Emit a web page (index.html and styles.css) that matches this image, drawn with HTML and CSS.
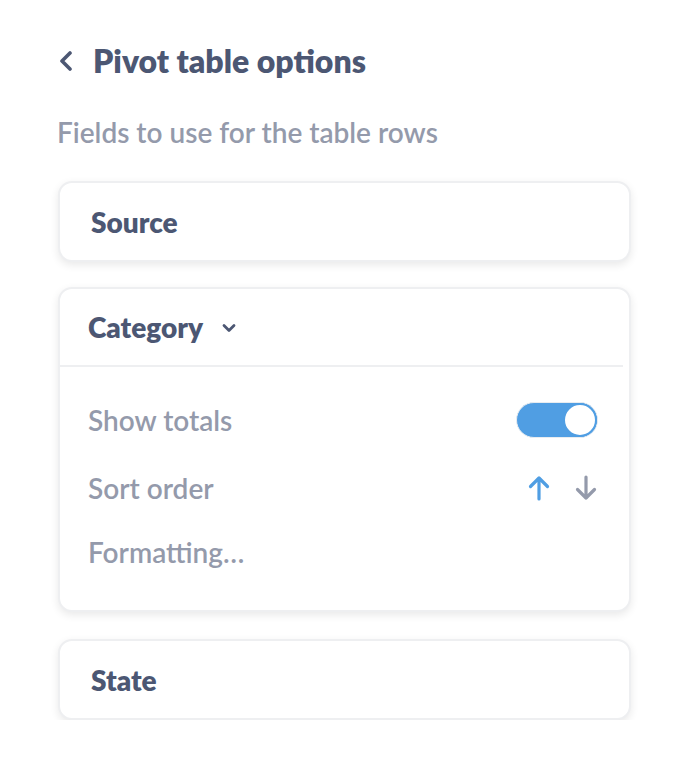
FILE: index.html
```html
<!DOCTYPE html>
<html>
<head>
<meta charset="utf-8">
<link rel="stylesheet" href="styles.css">
</head>
<body>
<div class="panel">
  <div class="header">
    <svg class="back" width="16" height="20" viewBox="0 0 16 20"><path d="M12 2 L4 10 L12 18" fill="none" stroke="#4c5773" stroke-width="3.6" stroke-linecap="round" stroke-linejoin="round"/></svg>
    <h1 class="title">Pivot table options</h1>
  </div>
  <div class="subtitle">Fields to use for the table rows</div>
  <div class="card simple first"><span class="field">Source</span></div>
  <div class="card expanded">
    <div class="card-head">
      <span class="field">Category</span>
      <svg class="caret" width="14" height="10" viewBox="0 0 14 10"><path d="M2 2.5 L7 7.5 L12 2.5" fill="none" stroke="#4c5773" stroke-width="2.8" stroke-linecap="round" stroke-linejoin="round"/></svg>
    </div>
    <div class="card-body">
      <div class="row">
        <span class="label">Show totals</span>
        <div class="toggle"><div class="knob"></div></div>
      </div>
      <div class="row">
        <span class="label">Sort order</span>
        <div class="arrows">
          <svg width="22" height="26" viewBox="0 0 22 26"><path d="M11 24 V3 M2.5 11.5 L11 3 L19.5 11.5" fill="none" stroke="#509ee3" stroke-width="3.2" stroke-linecap="round" stroke-linejoin="round"/></svg>
          <svg width="22" height="26" viewBox="0 0 22 26"><path d="M11 2 V23 M2.5 14.5 L11 23 L19.5 14.5" fill="none" stroke="#949aab" stroke-width="3.2" stroke-linecap="round" stroke-linejoin="round"/></svg>
        </div>
      </div>
      <div class="row last">
        <span class="label">Formatting…</span>
      </div>
    </div>
  </div>
  <div class="card simple last-card"><span class="field">State</span></div>
</div>
</body>
</html>
```
FILE: styles.css
```css
html, body {
  margin: 0;
  padding: 0;
  background: #ffffff;
}
body {
  font-family: Lato, "Open Sans", sans-serif;
  color: #4c5773;
}
.panel {
  padding: 40px 55px 0 58px;
  display: flex;
  flex-direction: column;
}
.header {
  display: flex;
  align-items: center;
  gap: 19px;
  height: 42px;
}
.back {
  display: block;
}
.title {
  margin: 0;
  font-size: 32px;
  font-weight: 800;
  color: #4c5773;
  line-height: 42px;
}
.subtitle {
  margin-top: 33px;
  font-size: 28px;
  font-weight: 600;
  color: #949aab;
  line-height: 34px;
  margin-left: -1px;
}
.card {
  background: #fff;
  border: 2px solid #eeeff1;
  border-radius: 14px;
  box-shadow: 0 3px 9px rgba(0, 0, 0, 0.09);
  box-sizing: border-box;
}
.simple {
  height: 81px;
  display: flex;
  align-items: center;
  padding-left: 31px;
}
.first {
  margin-top: 32px;
}
.last-card {
  margin-top: 27px;
}
.field {
  font-size: 28px;
  font-weight: 800;
  color: #4c5773;
}
.expanded {
  margin-top: 25px;
  height: 325px;
}
.card-head {
  height: 76px;
  display: flex;
  align-items: center;
  gap: 19px;
  padding-left: 28px;
  border-bottom: 2px solid #eeeff1;
  margin-right: 6px;
}
.caret {
  display: block;
  margin-top: 2px;
}
.card-body {
  padding: 21px 31px 0 28px;
  display: flex;
  flex-direction: column;
}
.row {
  display: flex;
  align-items: center;
  justify-content: space-between;
  height: 64px;
}
.row + .row {
  margin-top: 4px;
}
.row.last {
  margin-top: 0;
}
.label {
  font-size: 28px;
  font-weight: 600;
  color: #949aab;
}
.toggle {
  width: 82px;
  height: 36px;
  border-radius: 18px;
  background: #509ee3;
  box-sizing: border-box;
  border: 1px solid #e8ecf0;
  display: flex;
  justify-content: flex-end;
  align-items: center;
}
.knob {
  width: 34px;
  height: 34px;
  border-radius: 50%;
  background: #fff;
  box-sizing: border-box;
  border: 2px solid #509ee3;
}
.arrows {
  display: flex;
  gap: 25px;
  margin-right: 1px;
}
.arrows svg {
  display: block;
}
```
